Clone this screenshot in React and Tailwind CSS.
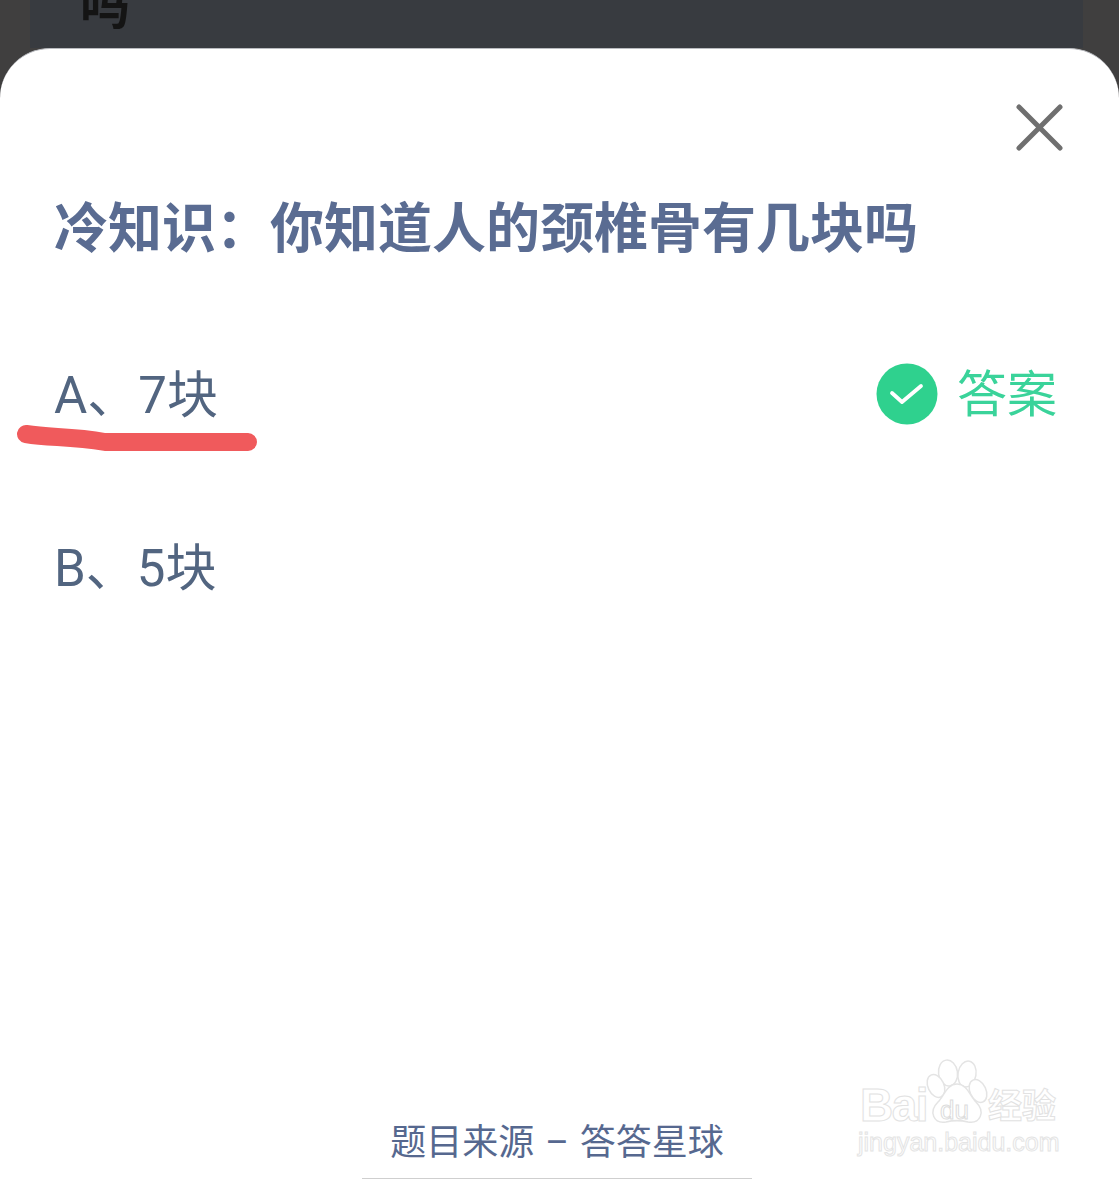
import React from 'react';

const cjk = { fontFamily: 'Roboto, "Noto Sans CJK SC", "Noto Sans", sans-serif' };
const latin = { fontFamily: '"Liberation Sans", sans-serif' };

function CloseIcon() {
  return (
    <svg width="48" height="48" viewBox="0 0 48 48" fill="none" stroke="#6f6f6f" strokeWidth="5" strokeLinecap="round">
      <path d="M3 3 L44 44 M44 3 L3 44" />
    </svg>
  );
}

function CheckBadge() {
  return (
    <svg width="62" height="62" viewBox="0 0 62 62">
      <circle cx="31" cy="31" r="30.5" fill="#2fd18e" />
      <path d="M16 30 L26 39 L45 23" fill="none" stroke="#ffffff" strokeWidth="3.8" strokeLinecap="round" strokeLinejoin="round" />
    </svg>
  );
}

function Watermark() {
  return (
    <div className="absolute left-[858px] top-[1058px] w-[210px] h-[100px] select-none">
      <svg className="absolute left-[0px] top-[0px]" width="210" height="70" viewBox="0 0 210 70" fill="#ffffff" stroke="#e4e4e4" strokeWidth="1.5">
        <ellipse cx="90" cy="15" rx="9.5" ry="13" transform="rotate(-8 90 15)" />
        <ellipse cx="109" cy="16" rx="9" ry="13" transform="rotate(10 109 16)" />
        <ellipse cx="78" cy="28" rx="8" ry="12" transform="rotate(-25 78 28)" />
        <ellipse cx="120" cy="33" rx="8" ry="12" transform="rotate(-25 120 33)" />
        <path d="M99 26 C89 26 86 38 80 44 C70 54 76 66 88 64 C96 62 102 62 110 64 C122 66 128 54 118 44 C112 38 109 26 99 26 Z" />
      </svg>
      <span className="absolute left-[2px] top-[22px] text-[46px] leading-[50px] font-bold tracking-[-1.5px] text-transparent [-webkit-text-stroke:1px_#e2e2e2]" style={latin}>
        Bai
      </span>
      <span className="absolute left-[82px] top-[38px] text-[26px] leading-[28px] text-transparent [-webkit-text-stroke:1px_#dcdcdc]" style={latin}>
        du
      </span>
      <span className="absolute left-[130px] top-[26px] text-[34px] leading-[44px] font-bold text-transparent [-webkit-text-stroke:1px_#e2e2e2]" style={cjk}>
        经验
      </span>
      <span className="absolute left-[0px] top-[71px] text-[25px] leading-[26px] text-transparent [-webkit-text-stroke:1px_#e4e4e4]" style={latin}>
        jingyan.baidu.com
      </span>
    </div>
  );
}

export default function App() {
  return (
    <div className="relative h-[1179px] w-[1119px] overflow-hidden flex flex-col bg-[#403f3f]" style={cjk}>
      {/* dimmed page behind the sheet */}
      <div className="h-[48px] ml-[30px] mr-[36px] bg-[#383b40] overflow-hidden shrink-0">
        <div className="pl-[50px] -mt-[23px] text-[50px] leading-[60px] font-bold text-[#141414]">吗</div>
      </div>

      {/* bottom sheet */}
      <div className="flex-1 bg-white rounded-t-[50px] flex flex-col border-t border-[#b9bbc0]">
        <div className="flex justify-end pt-[55px] pr-[55px] h-[103px] shrink-0">
          <CloseIcon />
        </div>

        <h1 className="pl-[54px] mt-[48px] text-[54px] leading-[60px] font-bold text-[#5a6c92] whitespace-nowrap">
          冷知识：你知道人的颈椎骨有几块吗
        </h1>

        <div className="mt-[104px] pl-[54px] pr-[62px] h-[60px] flex items-center justify-between text-[51px] leading-[60px] text-[#526580]">
          <span className="mt-[4px]">A、7块</span>
          <div className="flex items-center gap-[19px]">
            <CheckBadge />
            <span className="text-[50px] text-[#3ad39a] mt-[2px]">答案</span>
          </div>
        </div>

        <div className="mt-[114px] pl-[54px] h-[60px] flex items-center text-[51px] leading-[60px] text-[#526580]">
          <span className="mt-[2px]">B、5块</span>
        </div>

        <div className="mt-auto pr-[5px] flex flex-col items-center">
          <div className="text-[36px] leading-[44px] text-[#56688f] whitespace-nowrap [word-spacing:2px]">题目来源 – 答答星球</div>
          <div className="mt-[13px] w-[390px] h-[1px] bg-[#cfcfcf]" />
        </div>
      </div>

      {/* hand drawn underline on top of the screenshot */}
      <svg className="absolute left-[0px] top-[421px]" width="270" height="40" viewBox="0 0 270 40" fill="none">
        <path d="M26 13 C50 17 70 15 105 21 L248 21" stroke="#f05a5c" strokeWidth="18" strokeLinecap="round" strokeLinejoin="round" />
      </svg>

      <Watermark />
    </div>
  );
}
